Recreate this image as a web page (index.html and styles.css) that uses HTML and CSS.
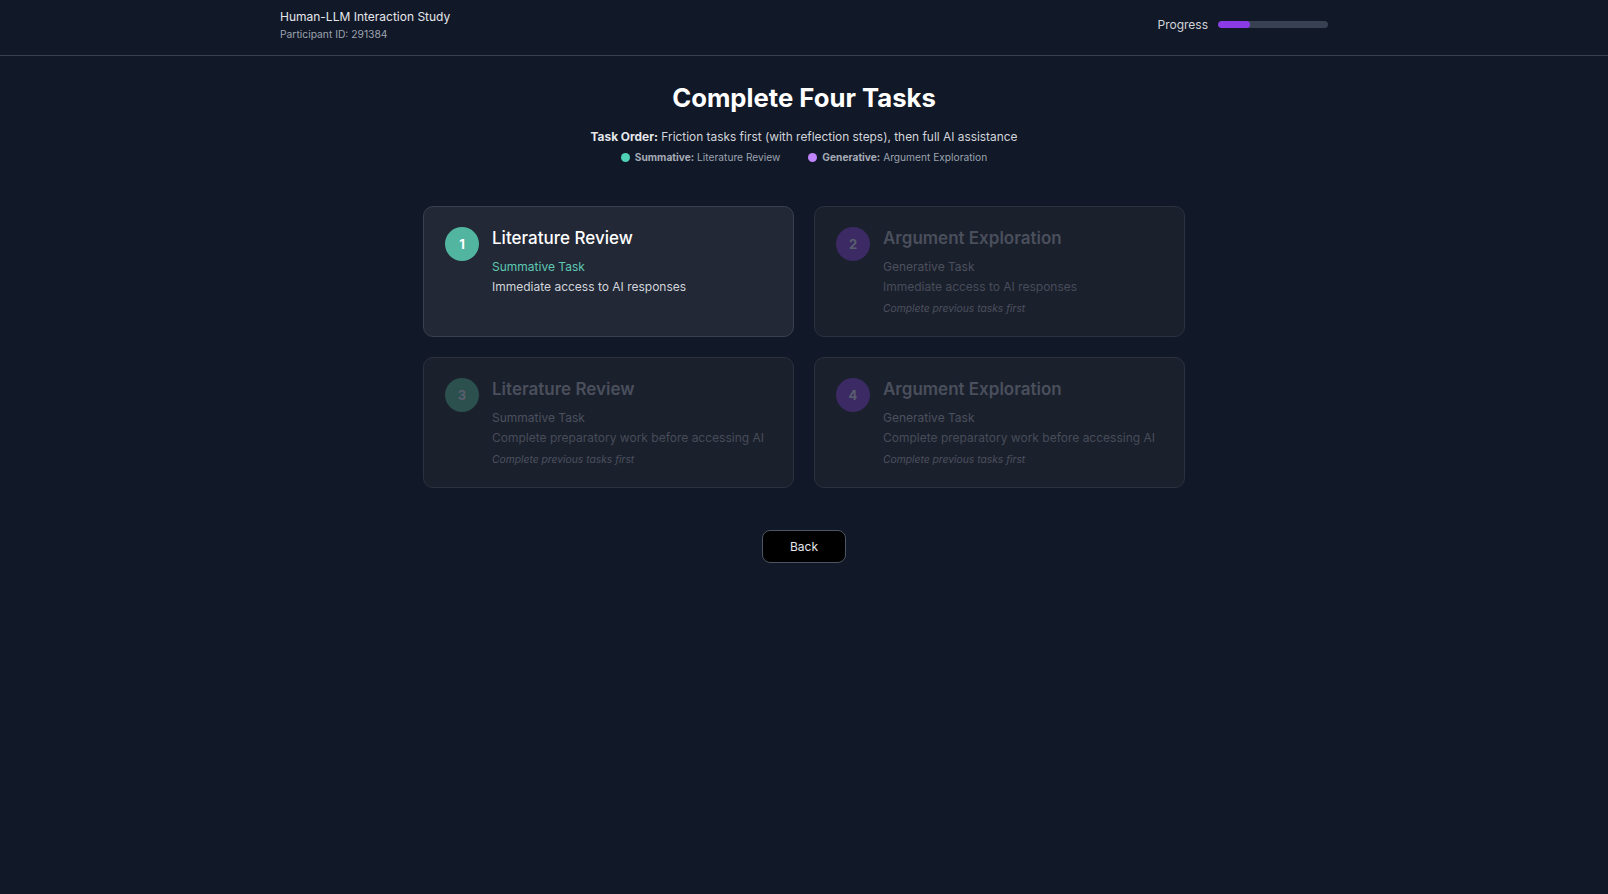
FILE: index.html
```html
<!DOCTYPE html>
<html lang="en">
<head>
<meta charset="utf-8">
<title>Human-LLM Interaction Study</title>
<link rel="stylesheet" href="styles.css">
</head>
<body>
<header class="topbar">
  <div class="topbar-inner">
    <div class="brand">
      <div class="brand-title">Human-LLM Interaction Study</div>
      <div class="brand-sub">Participant ID: 291384</div>
    </div>
    <div class="progress">
      <span class="progress-label">Progress</span>
      <div class="progress-track"><div class="progress-fill" style="width: 29%"></div></div>
    </div>
  </div>
</header>
<main class="main">
  <h1 class="page-title">Complete Four Tasks</h1>
  <p class="order"><strong>Task Order:</strong> Friction tasks first (with reflection steps), then full AI assistance</p>
  <div class="legend">
    <span class="legend-item"><span class="dot dot-teal"></span><strong>Summative:</strong>&nbsp;Literature Review</span>
    <span class="legend-item"><span class="dot dot-purple"></span><strong>Generative:</strong>&nbsp;Argument Exploration</span>
  </div>
  <div class="grid">
    <div class="card active">
      <div class="num num-teal">1</div>
      <div class="card-body">
        <div class="card-title">Literature Review</div>
        <div class="card-type type-teal">Summative Task</div>
        <div class="card-desc">Immediate access to AI responses</div>
      </div>
    </div>
    <div class="card locked">
      <div class="num num-purple">2</div>
      <div class="card-body">
        <div class="card-title">Argument Exploration</div>
        <div class="card-type">Generative Task</div>
        <div class="card-desc">Immediate access to AI responses</div>
        <div class="card-note">Complete previous tasks first</div>
      </div>
    </div>
    <div class="card locked">
      <div class="num num-teal-dim">3</div>
      <div class="card-body">
        <div class="card-title">Literature Review</div>
        <div class="card-type">Summative Task</div>
        <div class="card-desc">Complete preparatory work before accessing AI</div>
        <div class="card-note">Complete previous tasks first</div>
      </div>
    </div>
    <div class="card locked">
      <div class="num num-purple">4</div>
      <div class="card-body">
        <div class="card-title">Argument Exploration</div>
        <div class="card-type">Generative Task</div>
        <div class="card-desc">Complete preparatory work before accessing AI</div>
        <div class="card-note">Complete previous tasks first</div>
      </div>
    </div>
  </div>
  <button class="back">Back</button>
</main>
</body>
</html>
```
FILE: styles.css
```css
* { box-sizing: border-box; }
html, body { margin: 0; padding: 0; }
body {
  background: #111827;
  color: #e5e7eb;
  font-family: Inter, "Noto Sans", "Liberation Sans", sans-serif;
  min-height: 894px;
}
.topbar {
  border-bottom: 1px solid #374151;
  height: 56px;
}
.topbar-inner {
  width: 1048px;
  margin: 0 auto;
  padding-top: 8px;
  display: flex;
  justify-content: space-between;
  align-items: center;
}
.brand-title {
  font-size: 12px;
  line-height: 17px;
  font-weight: 400;
  color: #e5e7eb;
}
.brand-sub {
  margin-top: 2px;
  font-size: 10.3px;
  line-height: 14px;
  color: #9ca3af;
}
.progress {
  display: flex;
  align-items: center;
  gap: 10px;
}
.progress-label {
  font-size: 12px;
  color: #d1d5db;
}
.progress-track {
  width: 110px;
  height: 7px;
  border-radius: 4px;
  background: #374151;
  overflow: hidden;
}
.progress-fill {
  height: 100%;
  background: #8b3be6;
  border-radius: 4px;
}
.main {
  display: flex;
  flex-direction: column;
  align-items: center;
  padding-top: 26px;
}
.page-title {
  margin: 0;
  font-size: 25.7px;
  line-height: 31px;
  font-weight: 700;
  color: #ffffff;
}
.order {
  margin: 15px 0 0;
  font-size: 11.9px;
  line-height: 17px;
  color: #d1d5db;
}
.order strong { color: #e5e7eb; font-weight: 700; }
.legend {
  margin-top: 5px;
  display: flex;
  gap: 28px;
  font-size: 10.2px;
  line-height: 14px;
  color: #9ca3af;
}
.legend-item { display: flex; align-items: center; }
.legend-item strong { color: #a5abb6; font-weight: 700; }
.dot {
  width: 9px;
  height: 9px;
  border-radius: 50%;
  margin-right: 5px;
}
.dot-teal { background: #4fd1b5; }
.dot-purple { background: #c084fc; }
.grid {
  margin-top: 42px;
  width: 762px;
  display: grid;
  grid-template-columns: 1fr 1fr;
  gap: 20px 20px;
}
.card {
  display: flex;
  align-items: flex-start;
  gap: 13px;
  padding: 20px 21px;
  border-radius: 10px;
  border: 1px solid #3a404e;
  min-height: 131px;
}
.card.active { background: #222836; }
.card.locked { background: #1b202d; border-color: #2b313e; }
.num {
  flex: none;
  width: 34px;
  height: 34px;
  border-radius: 50%;
  display: flex;
  align-items: center;
  justify-content: center;
  font-size: 13px;
  font-weight: 700;
  color: #ffffff;
}
.num-teal { background: #52b5a0; }
.num-purple { background: #3c2a64; color: #5a5f6e; }
.num-teal-dim { background: #2c504e; color: #5a5f6e; }
.card-title {
  font-size: 17px;
  line-height: 23px;
  font-weight: 500;
  color: #ffffff;
}
.card-type {
  margin-top: 8px;
  font-size: 12px;
  line-height: 17px;
  color: #4b505d;
}
.type-teal { color: #5ec9b3; }
.card-desc {
  margin-top: 3px;
  font-size: 12px;
  line-height: 17px;
  color: #d1d5db;
}
.card-note {
  margin-top: 6px;
  font-size: 10.3px;
  line-height: 14px;
  font-style: italic;
  color: #4b505d;
}
.locked .card-title { color: #4a4f5c; font-weight: 600; }
.locked .card-desc { color: #474c59; }
.back {
  margin-top: 42px;
  height: 33px;
  padding: 0 27px;
  background: #000000;
  color: #e5e7eb;
  border: 1px solid #4b5563;
  border-radius: 8px;
  font-family: Inter, "Noto Sans", "Liberation Sans", sans-serif;
  font-size: 12px;
  font-weight: 400;
}
```
